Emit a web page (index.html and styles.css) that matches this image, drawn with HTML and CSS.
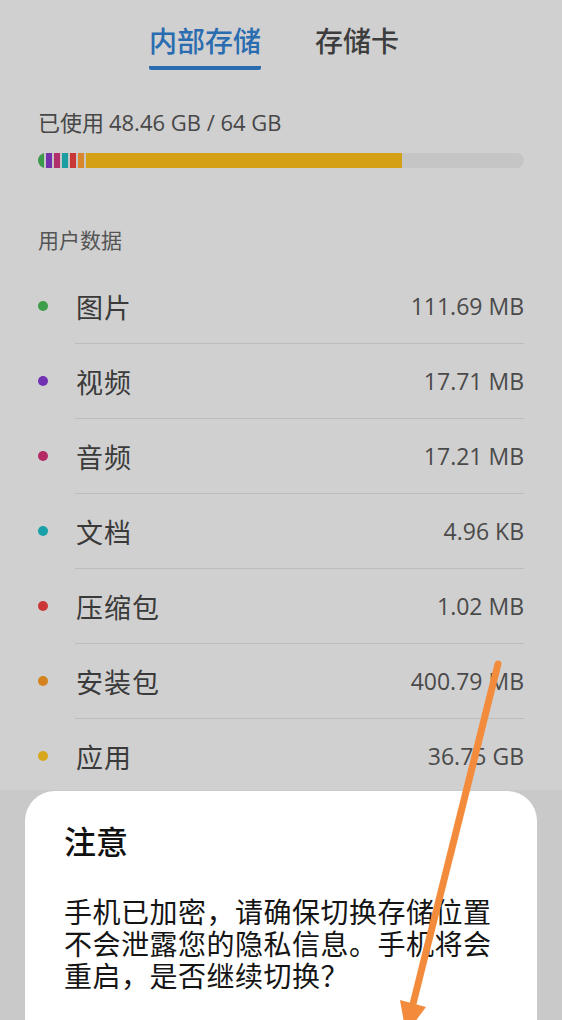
FILE: index.html
```html
<!DOCTYPE html>
<html lang="zh-CN">
<head>
  <meta charset="UTF-8">
  <meta name="viewport" content="width=device-width, initial-scale=1.0">
  <title>存储</title>
  <link rel="stylesheet" href="styles.css">
</head>
<body>
  <div class="screen">
    <div class="tabs">
      <div class="tab active">内部存储</div>
      <div class="tab">存储卡</div>
    </div>

    <div class="usage">已使用 <span class="num">48.46 GB / 64 GB</span></div>
    <div class="bar">
      <span class="seg" style="background:#3c9a4c"></span>
      <span class="seg" style="background:#7433ad"></span>
      <span class="seg" style="background:#b02f6c"></span>
      <span class="seg" style="background:#1b9ea2"></span>
      <span class="seg" style="background:#c93636"></span>
      <span class="seg" style="background:#d8872c"></span>
      <span class="seg apps" style="width:316px"></span>
    </div>

    <div class="section-title">用户数据</div>
    <div class="list">
      <div class="row"><span class="dot" style="background:#3e9d48"></span><div class="row-main"><span class="label">图片</span><span class="value">111.69 MB</span></div></div>
      <div class="row"><span class="dot" style="background:#7231b3"></span><div class="row-main"><span class="label">视频</span><span class="value">17.71 MB</span></div></div>
      <div class="row"><span class="dot" style="background:#b42a64"></span><div class="row-main"><span class="label">音频</span><span class="value">17.21 MB</span></div></div>
      <div class="row"><span class="dot" style="background:#1aa0a8"></span><div class="row-main"><span class="label">文档</span><span class="value">4.96 KB</span></div></div>
      <div class="row"><span class="dot" style="background:#cc3535"></span><div class="row-main"><span class="label">压缩包</span><span class="value">1.02 MB</span></div></div>
      <div class="row"><span class="dot" style="background:#d5831f"></span><div class="row-main"><span class="label">安装包</span><span class="value">400.79 MB</span></div></div>
      <div class="row"><span class="dot" style="background:#d7a71d"></span><div class="row-main"><span class="label">应用</span><span class="value">36.75 GB</span></div></div>
    </div>
  </div>

  <div class="sheet">
    <div class="dialog">
      <div class="dialog-title">注意</div>
      <p class="dialog-text">手机已加密，请确保切换存储位置不会泄露您的隐私信息。手机将会重启，是否继续切换？</p>
    </div>
  </div>

  <!-- annotation arrow drawn over the screenshot -->
  <svg class="arrow" width="562" height="1020" viewBox="0 0 562 1020">
    <line x1="498" y1="664" x2="413" y2="1004" stroke="#f28b3b" stroke-width="7" stroke-linecap="round"/>
    <polygon points="426,1007 400,1000 406,1034" fill="#f28b3b"/>
  </svg>
</body>
</html>
```

FILE: styles.css
```css
body {
  margin: 0;
  width: 562px;
  height: 1020px;
  overflow: hidden;
  position: relative;
  background: #c9c9c9;
  font-family: "Noto Sans CJK SC", "Noto Sans", sans-serif;
}
.screen {
  height: 790px;
  overflow: hidden;
  background: #d0d0d0;
  padding: 0 38px;
}
.tabs {
  display: flex;
  justify-content: center;
  gap: 54px;
  padding: 22px 14px 0 0;
}
.tab {
  font-size: 28px;
  line-height: 36px;
  font-weight: 500;
  color: #3d3d3d;
  padding-bottom: 8px;
  border-bottom: 4px solid transparent;
}
.tab.active {
  color: #2a6cb0;
  border-bottom-color: #2a6cb0;
  border-radius: 0 0 2px 2px;
}
.usage {
  margin-top: 36px;
  font-size: 22px;
  line-height: 30px;
  color: #474747;
}
.usage .num {
  font-family: "Open Sans", "Noto Sans", sans-serif;
}
.bar {
  margin-top: 16px;
  height: 15px;
  border-radius: 8px;
  background: #c5c5c5;
  display: flex;
  gap: 2px;
  overflow: hidden;
}
.bar .seg {
  width: 6px;
  background: #d6d6d6;
}
.bar .seg.apps {
  background: #d4a016;
}
.section-title {
  margin-top: 56px;
  font-size: 21px;
  line-height: 30px;
  color: #555;
}
.list {
  margin-top: 14px;
}
.row {
  display: flex;
  align-items: center;
  gap: 27px;
}
.dot {
  width: 10px;
  height: 10px;
  border-radius: 50%;
  flex-shrink: 0;
}
.row-main {
  flex: 1;
  height: 75px;
  box-sizing: border-box;
  border-top: 1px solid #bcbcbc;
  display: flex;
  align-items: center;
  justify-content: space-between;
}
.row:first-child .row-main {
  border-top-color: transparent;
}
.label {
  font-size: 27px;
  color: #3a3a3a;
  padding-left: 1px;
  letter-spacing: 1px;
}
.value {
  font-family: "Open Sans", "Noto Sans", sans-serif;
  font-size: 23px;
  color: #4a4a4a;
}
.sheet {
  padding: 1px 25px 0;
}
.dialog {
  background: #fff;
  border-radius: 30px 30px 0 0;
  height: 229px;
  box-sizing: border-box;
  padding: 29px 39px 0;
}
.dialog-title {
  font-size: 32px;
  line-height: 40px;
  font-weight: 500;
  color: #111;
}
.dialog-text {
  margin: 35px 0 0;
  font-size: 28px;
  line-height: 32px;
  letter-spacing: 0.5px;
  color: #151515;
}
.arrow {
  position: absolute;
  left: 0;
  top: 0;
  pointer-events: none;
}
```
